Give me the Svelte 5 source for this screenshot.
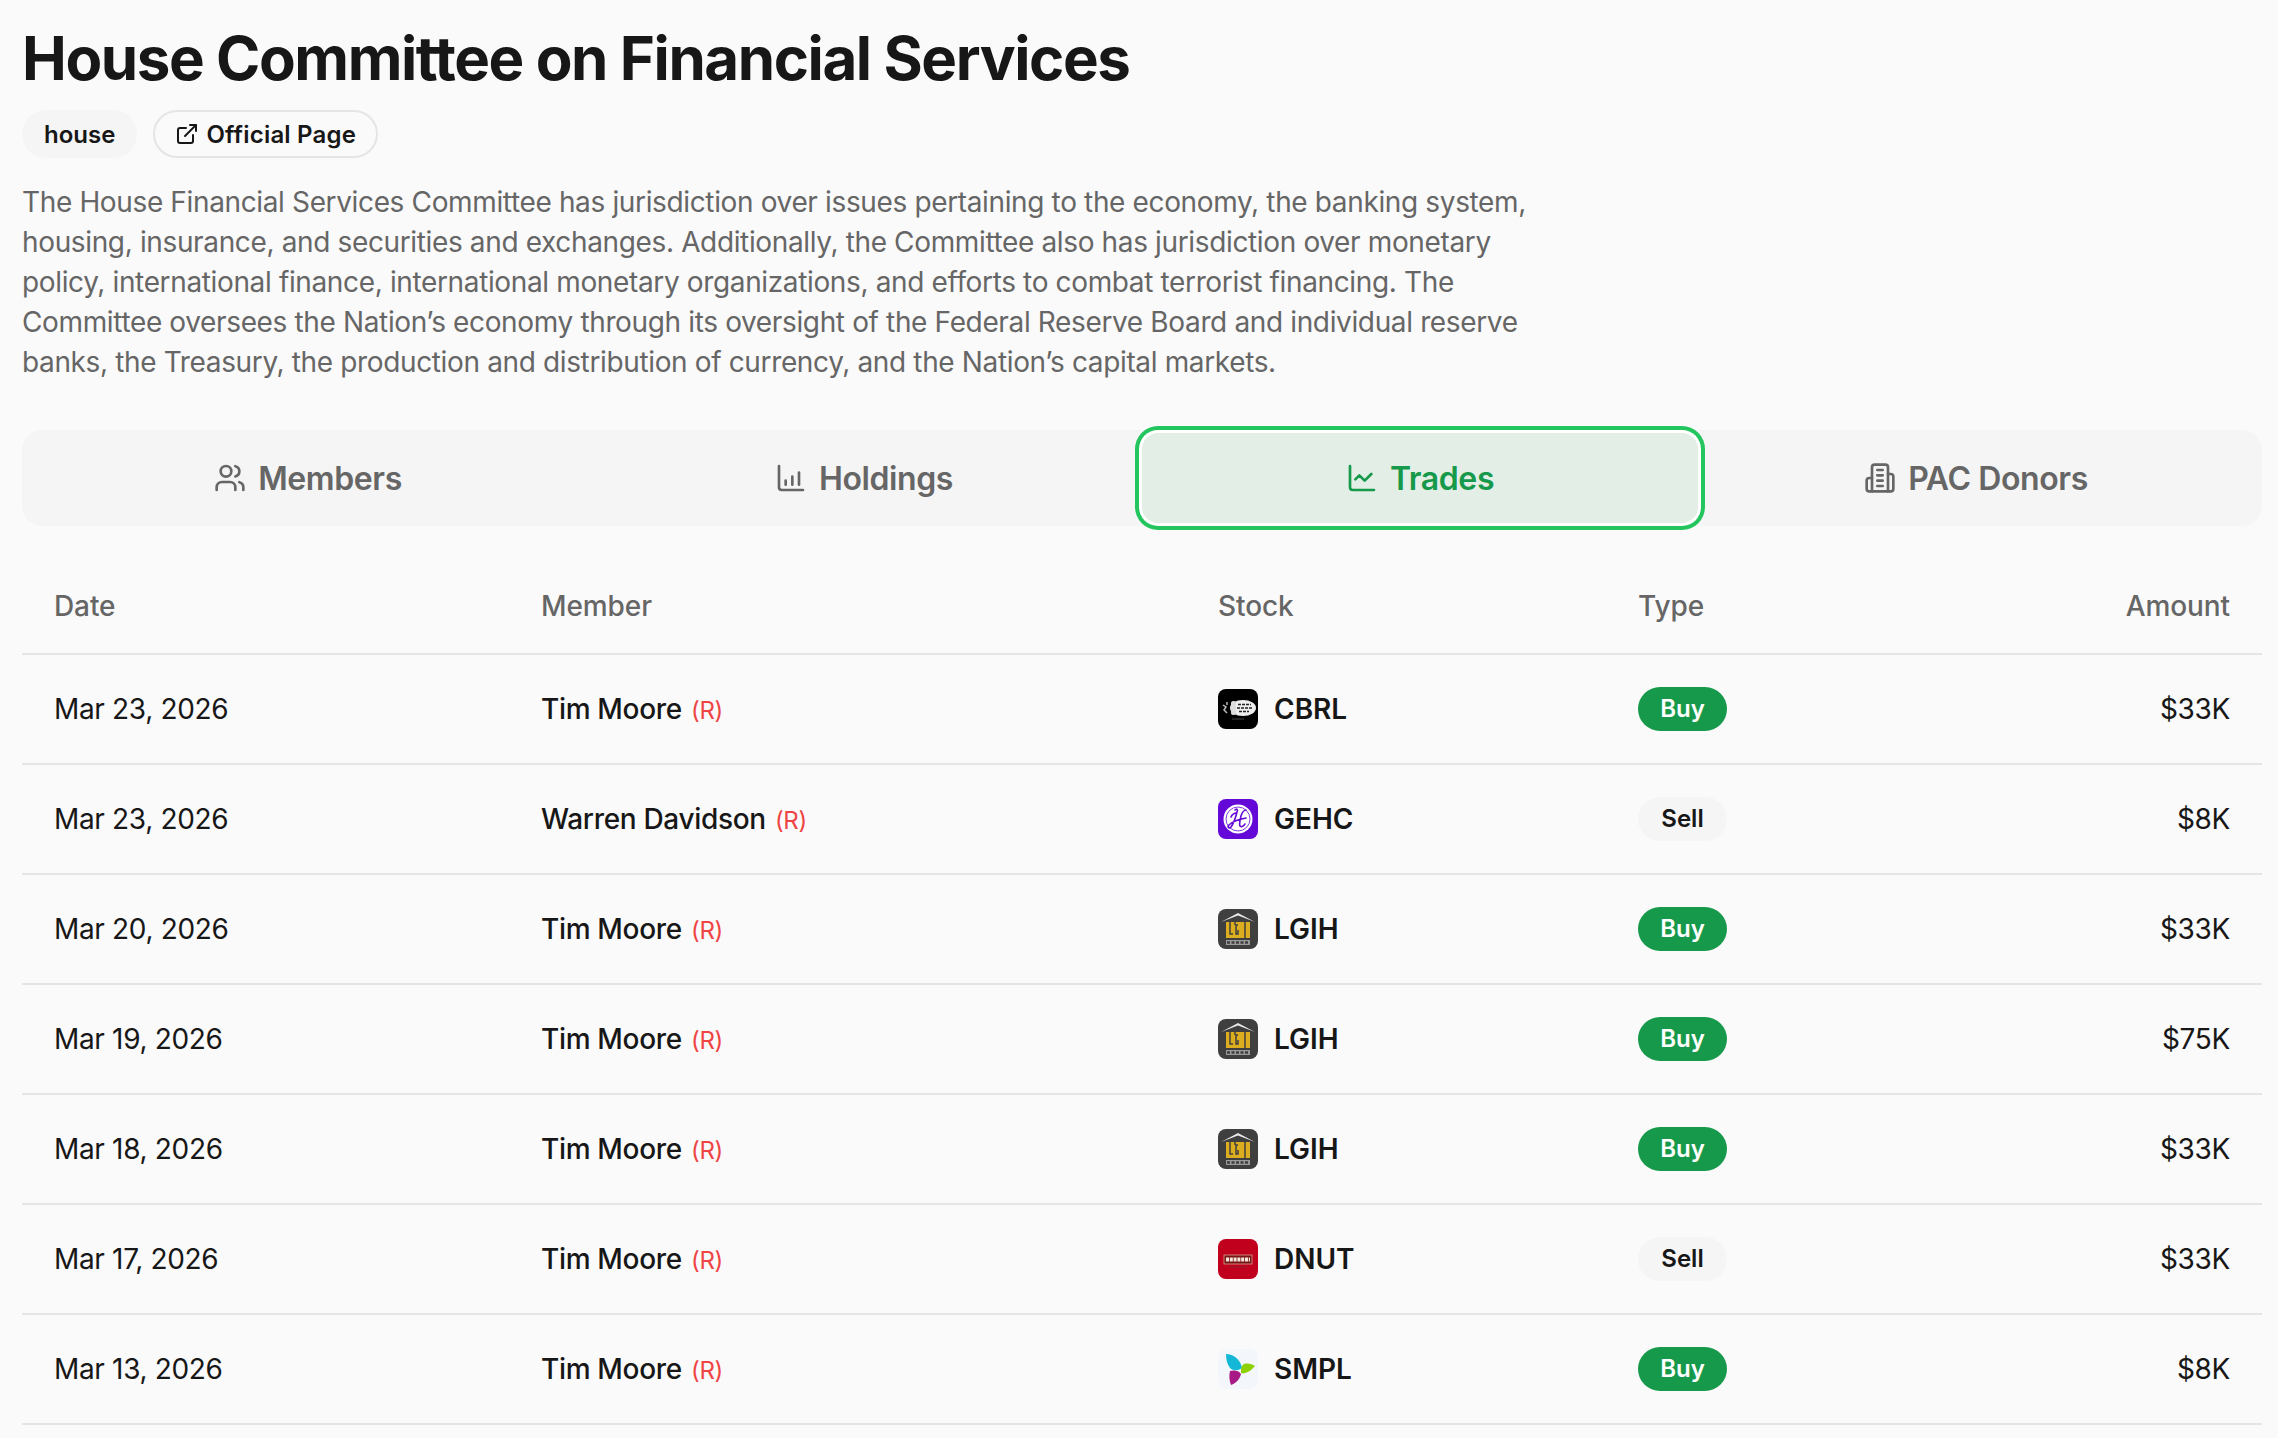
<script>

    // trades shown in the table
    const trades = [
        { date: 'Mar 23, 2026', member: 'Tim Moore', stock: 'CBRL', type: 'Buy', amount: '$33K' },
        { date: 'Mar 23, 2026', member: 'Warren Davidson', stock: 'GEHC', type: 'Sell', amount: '$8K' },
        { date: 'Mar 20, 2026', member: 'Tim Moore', stock: 'LGIH', type: 'Buy', amount: '$33K' },
        { date: 'Mar 19, 2026', member: 'Tim Moore', stock: 'LGIH', type: 'Buy', amount: '$75K' },
        { date: 'Mar 18, 2026', member: 'Tim Moore', stock: 'LGIH', type: 'Buy', amount: '$33K' },
        { date: 'Mar 17, 2026', member: 'Tim Moore', stock: 'DNUT', type: 'Sell', amount: '$33K' },
        { date: 'Mar 13, 2026', member: 'Tim Moore', stock: 'SMPL', type: 'Buy', amount: '$8K' }
    ];

</script>


<main class="page">
    <h1>House Committee on Financial Services</h1>

    <div class="badges">
        <span class="badge">house</span>
        <span class="badge link">
            <svg viewBox="0 0 24 24" class="link-icon">
                <path d="M15 3h6v6" />
                <path d="M10 14 21 3" />
                <path d="M18 13v6a2 2 0 0 1-2 2H5a2 2 0 0 1-2-2V8a2 2 0 0 1 2-2h6" />
            </svg>
            Official Page
        </span>
    </div>

    <p class="description">The House Financial Services Committee has jurisdiction over issues pertaining to the economy, the banking system, housing, insurance, and securities and exchanges. Additionally, the Committee also has jurisdiction over monetary policy, international finance, international monetary organizations, and efforts to combat terrorist financing. The Committee oversees the Nation’s economy through its oversight of the Federal Reserve Board and individual reserve banks, the Treasury, the production and distribution of currency, and the Nation’s capital markets.</p>

    <div class="tabs">
        <div class="tab">
            <svg viewBox="0 0 24 24" class="tab-icon">
                <path d="M16 21v-2a4 4 0 0 0-4-4H6a4 4 0 0 0-4 4v2" />
                <circle cx="9" cy="7" r="4" />
                <path d="M22 21v-2a4 4 0 0 0-3-3.87" />
                <path d="M16 3.13a4 4 0 0 1 0 7.75" />
            </svg>
            Members
        </div>
        <div class="tab">
            <svg viewBox="0 0 24 24" class="tab-icon">
                <path d="M3 3v16a2 2 0 0 0 2 2h16" />
                <path d="M8 17v-3" />
                <path d="M13 17v-6" />
                <path d="M18 17V8" />
            </svg>
            Holdings
        </div>
        <div class="tab active">
            <svg viewBox="0 0 24 24" class="tab-icon">
                <path d="M3 3v16a2 2 0 0 0 2 2h16" />
                <path d="m19 9-5 5-4-4-3 3" />
            </svg>
            Trades
        </div>
        <div class="tab">
            <svg viewBox="0 0 24 24" class="tab-icon">
                <path d="M6 22V4a2 2 0 0 1 2-2h8a2 2 0 0 1 2 2v18Z" />
                <path d="M6 12H4a2 2 0 0 0-2 2v6a2 2 0 0 0 2 2h2" />
                <path d="M18 9h2a2 2 0 0 1 2 2v9a2 2 0 0 1-2 2h-2" />
                <path d="M10 6h4" />
                <path d="M10 10h4" />
                <path d="M10 14h4" />
                <path d="M10 18h4" />
            </svg>
            PAC Donors
        </div>
    </div>

    <table>
        <colgroup>
            <col class="col-date" />
            <col class="col-member" />
            <col class="col-stock" />
            <col class="col-type" />
            <col />
        </colgroup>
        <thead>
            <tr>
                <th>Date</th>
                <th>Member</th>
                <th>Stock</th>
                <th>Type</th>
                <th class="right">Amount</th>
            </tr>
        </thead>
        <tbody>
            {#each trades as trade}
                <tr>
                    <td>{trade.date}</td>
                    <td class="member">{trade.member} <span class="party">(R)</span></td>
                    <td>
                        <div class="stock">
                            {#if trade.stock === 'CBRL'}
                                <svg class="logo" viewBox="0 0 40 40">
                                    <rect width="40" height="40" fill="#000" />
                                    <ellipse cx="25" cy="19" rx="13" ry="8" fill="#eee" />
                                    <rect x="13" y="12" width="5" height="14" rx="2" fill="#ddd" />
                                    <path d="M5 16l3 2-2 3 3 3M9 13v3" stroke="#bbb" stroke-width="1.500" fill="none" />
                                    <path d="M20 15.500h13M19 19h15M21 22.500h10" stroke="#222" stroke-width="1.500" stroke-dasharray="3 1" />
                                    <path d="M14 30h12" stroke="#444" stroke-width="1" />
                                </svg>
                            {:else if trade.stock === 'GEHC'}
                                <svg class="logo" viewBox="0 0 40 40">
                                    <rect width="40" height="40" fill="#6308d6" />
                                    <circle cx="20" cy="20" r="14.500" fill="#fff" />
                                    <circle cx="20" cy="20" r="12" fill="none" stroke="#6308d6" stroke-width="0.800" />
                                    <path d="M17 11c2-2 3 0 2 2-1 4-3 11-6 15-2 2-4 0-2-2 3-3 11-6 17-7M28 11c-3 0-4 3-5 6-1 4-2 8-1 10 1 1 3 1 5-2M13 18c1-3 4-4 5-4" stroke="#6308d6" stroke-width="1.600" fill="none" stroke-linecap="round" />
                                </svg>
                            {:else if trade.stock === 'LGIH'}
                                <svg class="logo" viewBox="0 0 40 40">
                                    <rect width="40" height="40" fill="#3f3f3f" />
                                    <path d="M3 13 20 4l17 9-17-6.500Z" fill="#e6e6e6" />
                                    <rect x="8" y="13" width="24" height="16" fill="#dcae1f" />
                                    <path d="M12 13v12h3M20 16h-2v9h2v-4M27 13v16M17 13v3" stroke="#3f3f3f" stroke-width="1.500" fill="none" />
                                    <rect x="8" y="31" width="24" height="5" fill="#9a9a9a" />
                                    <path d="M9 33.500h22" stroke="#3f3f3f" stroke-width="2.500" stroke-dasharray="3 1.500" />
                                </svg>
                            {:else if trade.stock === 'DNUT'}
                                <svg class="logo" viewBox="0 0 40 40">
                                    <rect width="40" height="40" fill="#c0001d" />
                                    <rect x="6" y="16" width="28" height="9" fill="#7a1515" stroke="#d9a08e" stroke-width="0.800" />
                                    <path d="M8 20.500h24" stroke="#f6e6dc" stroke-width="4" stroke-dasharray="3 0.800" />
                                    <path d="M11 28h18" stroke="#8e2230" stroke-width="1" />
                                </svg>
                            {:else}
                                <svg class="logo" viewBox="0 0 40 40">
                                    <rect width="40" height="40" fill="#f3f6fb" />
                                    <path d="M8 5C14 5 22 9 24 19 20 22 15 22 12 19 9 15 8 10 8 5Z" fill="#13b8d6" />
                                    <path d="M37 17C32 23 27 25 23 24 23 20 23 17 26 15 30 14 34 15 37 17Z" fill="#8fd000" />
                                    <path d="M13 36C11 31 11 26 12 22 15 21 21 21 23 25 22 30 18 34 13 36Z" fill="#a81a85" />
                                </svg>
                            {/if}
                            <span>{trade.stock}</span>
                        </div>
                    </td>
                    <td>
                        <span class="pill" class:buy={trade.type === 'Buy'}>{trade.type}</span>
                    </td>
                    <td class="right">{trade.amount}</td>
                </tr>
            {/each}
        </tbody>
    </table>
</main>


<style>

    :global(body) {
        background: #fafafa;
        overflow: hidden;
    }

    .page {
        padding: 24px 16px 0 22px;
        font-family: Inter, "Liberation Sans", sans-serif;
        color: #171717;
    }

    h1 {
        margin: 0;
        font-size: 60px;
        line-height: 68px;
        font-weight: 700;
        letter-spacing: -1.42px;
    }

    .badges {
        display: flex;
        align-items: center;
        gap: 16px;
        margin-top: 18px;
    }

    .badge {
        display: inline-flex;
        align-items: center;
        height: 48px;
        padding: 0 22px;
        border-radius: 24px;
        background: #f5f5f5;
        font-size: 24px;
        font-weight: 600;
    }

    .link {
        gap: 7px;
        height: 44px;
        padding: 0 20px;
        background: none;
        border: 2px solid #e5e5e5;
        letter-spacing: 0.2px;
    }

    .link-icon {
        width: 24px;
        height: 24px;
        fill: none;
        stroke: currentColor;
        stroke-width: 2;
        stroke-linecap: round;
        stroke-linejoin: round;
    }

    .description {
        margin: 24px 0 0;
        max-width: 1536px;
        font-size: 28px;
        line-height: 40px;
        letter-spacing: -0.36px;
        color: #666;
    }

    .tabs {
        display: grid;
        grid-template-columns: repeat(4, 1fr);
        height: 96px;
        box-sizing: border-box;
        margin-top: 48px;
        padding: 3px 8px;
        border-radius: 20px;
        background: #f5f5f5;
    }

    .tab {
        display: flex;
        align-items: center;
        justify-content: center;
        gap: 12px;
        border-radius: 16px;
        font-size: 32px;
        font-weight: 600;
        letter-spacing: -0.4px;
        color: #666;
    }

    .tab-icon {
        width: 32px;
        height: 32px;
        fill: none;
        stroke: currentColor;
        stroke-width: 2;
        stroke-linecap: round;
        stroke-linejoin: round;
    }

    .active {
        background: #e3eee6;
        color: #16994a;
        box-shadow: 0 0 0 3px #fff, 0 0 0 7px #22c55e;
    }

    table {
        width: 100%;
        margin-top: 32px;
        border-collapse: collapse;
        table-layout: fixed;
        font-size: 28px;
        letter-spacing: -0.33px;
    }

    .col-date {
        width: 487px;
    }

    .col-member {
        width: 677px;
    }

    .col-stock {
        width: 420px;
    }

    .col-type {
        width: 420px;
    }

    th, td {
        padding: 0 32px;
        text-align: left;
        border-bottom: 2px solid #e5e5e5;
    }

    th {
        height: 95px;
        font-weight: 500;
        letter-spacing: -0.1px;
        color: #666;
    }

    td {
        height: 108px;
    }

    .right {
        text-align: right;
    }

    .member {
        font-weight: 500;
    }

    .party {
        margin-left: 2px;
        font-size: 24px;
        font-weight: 400;
        color: #ef4444;
    }

    .stock {
        display: flex;
        align-items: center;
        gap: 16px;
        font-weight: 600;
        letter-spacing: 0;
    }

    .logo {
        width: 40px;
        height: 40px;
        border-radius: 8px;
    }

    .pill {
        display: inline-block;
        min-width: 89px;
        border-radius: 22px;
        background: #f5f5f5;
        font-size: 24px;
        line-height: 44px;
        font-weight: 600;
        letter-spacing: 0;
        text-align: center;
    }

    .buy {
        background: #16994a;
        color: #fff;
    }

</style>
